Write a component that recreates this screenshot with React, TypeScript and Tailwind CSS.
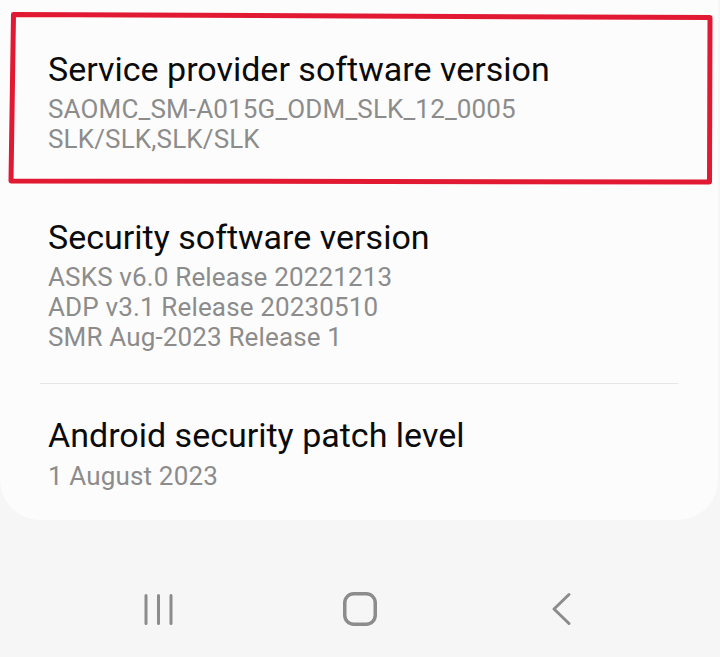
import React from "react";

function Item({ title, lines, className, gap = "mt-[6px]" }: { title: string; lines: string[]; className: string; gap?: string }) {
  return (
    <div className={`pl-[48px] ${className}`}>
      <div className="text-[34px] leading-[38px] text-[#0b0b0b]">{title}</div>
      <div className={`${gap} text-[26px] leading-[30px] tracking-[0.15px] text-[#8c8c8c]`}>
        {lines.map((l) => (
          <div key={l}>{l}</div>
        ))}
      </div>
    </div>
  );
}

export default function App() {
  return (
    <div
      className="relative w-[720px] h-[657px] overflow-hidden bg-[#f6f6f6]"
      style={{ fontFamily: "Roboto, 'Noto Sans', sans-serif" }}
    >
      <div className="mr-[2px] h-[520px] rounded-b-[40px] bg-[#fcfcfc]">
        <Item
          className="pt-[50px] pb-[33px]"
          title="Service provider software version"
          lines={["SAOMC_SM-A015G_ODM_SLK_12_0005", "SLK/SLK,SLK/SLK"]}
        />
        <Item
          className="pt-[31px] pb-[31px]"
          title="Security software version"
          lines={["ASKS v6.0 Release 20221213", "ADP v3.1 Release 20230510", "SMR Aug-2023 Release 1"]}
        />
        <div className="mx-[40px] h-px bg-[#e6e6e6]" />
        <Item className="pt-[32px]" gap="mt-[7px]" title="Android security patch level" lines={["1 August 2023"]} />
      </div>

      <div className="mt-[72px] flex justify-center">
        <div className="w-[201px] flex justify-center">
          <svg width="34" height="34" viewBox="0 0 34 34" fill="none" stroke="#8c8c8c" strokeWidth="3" strokeLinecap="round">
            <path d="M4 3.5V31.5M16.5 3.5V31.5M29 3.5V31.5" />
          </svg>
        </div>
        <div className="w-[201px] flex justify-center">
          <svg width="34" height="34" viewBox="0 0 34 34" fill="none" stroke="#8c8c8c" strokeWidth="3.5">
            <rect x="1.75" y="1.75" width="30.5" height="30.5" rx="9" />
          </svg>
        </div>
        <div className="w-[201px] flex justify-center">
          <svg width="34" height="34" viewBox="0 0 34 34" fill="none" stroke="#8c8c8c" strokeWidth="3" strokeLinecap="round" strokeLinejoin="round">
            <path d="M25 2.5L10 17L25 31.5" />
          </svg>
        </div>
      </div>

      <svg className="absolute left-0 top-0 pointer-events-none" width="720" height="200" viewBox="0 0 720 200">
        <path
          d="M13.5 14.5L710 17.5L709.5 182L11 181Z"
          fill="none"
          stroke="#e11932"
          strokeWidth="5"
          strokeLinejoin="round"
        />
      </svg>
    </div>
  );
}
